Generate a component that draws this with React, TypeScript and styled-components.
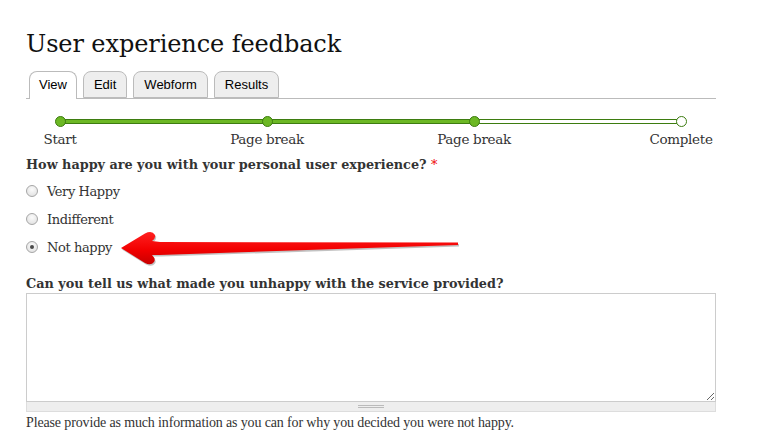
import React from "react";
import styled, { createGlobalStyle } from "styled-components";

const Global = createGlobalStyle`
  html, body { margin: 0; padding: 0; background: #fff; }
  body { font-family: "DejaVu Serif", Georgia, serif; color: #333; }
`;

const Page = styled.div`
  position: relative;
  width: 690px;
  padding: 26px 0 0 26px;
`;

const Title = styled.h1`
  margin: 0;
  font-family: "DejaVu Serif", Georgia, serif;
  font-weight: normal;
  font-size: 24px;
  line-height: 36px;
  color: #111;
  letter-spacing: -0.1px;
`;

const Tabs = styled.ul`
  display: flex;
  gap: 6px;
  margin: 9px 0 0;
  padding: 0 0 0 3px;
  list-style: none;
  border-bottom: 1px solid #bbb;
  height: 27px;
`;

const Tab = styled.li<{ $active?: boolean }>`
  box-sizing: border-box;
  height: ${(p) => (p.$active ? "28px" : "27px")};
  padding: ${(p) => (p.$active ? "0 9px" : "0 10px")};
  border: 1px solid #bbb;
  border-bottom: ${(p) => (p.$active ? "none" : "1px solid #bbb")};
  border-radius: 8px 8px 0 0;
  background: ${(p) => (p.$active ? "#fff" : "#eee")};
  font-family: "Liberation Sans", Arial, sans-serif;
  font-size: 13px;
  line-height: 25px;
  color: #000;
`;

const Progress = styled.div`
  margin: 20px 35px 0 34px;
`;

const Track = styled.div`
  position: relative;
  height: 5px;
  display: flex;
`;

const Filled = styled.div`
  box-sizing: border-box;
  flex: 0 0 414px;
  height: 5px;
  background: #6cb824;
  border: 1px solid #3d7c10;
`;

const Empty = styled.div`
  box-sizing: border-box;
  flex: 1;
  height: 5px;
  background: #fff;
  border: 1px solid #3d7c10;
  border-left: none;
`;

const Dot = styled.span<{ $done?: boolean }>`
  position: absolute;
  top: -3px;
  width: 11px;
  height: 11px;
  box-sizing: border-box;
  margin-left: -5.5px;
  border-radius: 50%;
  border: 1px solid #3d7c10;
  background: ${(p) => (p.$done ? "#6cb824" : "#fff")};
`;

const Labels = styled.div`
  display: flex;
  justify-content: space-between;
  margin-top: 5px;
`;

const LabelSlot = styled.div`
  width: 0;
  display: flex;
  justify-content: center;
  white-space: nowrap;
  font-size: 13.5px;
  letter-spacing: -0.3px;
  line-height: 20px;
  color: #333;
`;

const Question = styled.div`
  margin-top: 6px;
  font-weight: bold;
  font-size: 12.8px;
  line-height: 20px;
  color: #333;
`;

const Req = styled.span`
  color: #e00;
  font-weight: normal;
`;

const Options = styled.div`
  display: flex;
  flex-direction: column;
  gap: 8px;
  margin-top: 6px;
`;

const Option = styled.label`
  display: flex;
  align-items: center;
  gap: 9px;
  height: 20px;
  font-size: 13px;
  letter-spacing: -0.4px;
  color: #333;
`;

const Radio = styled.span<{ $checked?: boolean }>`
  position: relative;
  box-sizing: border-box;
  width: 12px;
  height: 12px;
  border-radius: 50%;
  border: 1px solid #a6a6a6;
  background: radial-gradient(circle at 50% 35%, #fbfbfb 0%, #e6e6e6 70%, #d8d8d8 100%);
  &::after {
    content: "";
    display: ${(p) => (p.$checked ? "block" : "none")};
    position: absolute;
    left: 3px;
    top: 3px;
    width: 4px;
    height: 4px;
    border-radius: 50%;
    background: #4a4a4a;
  }
`;

const Question2 = styled(Question)`
  margin-top: 17px;
  margin-bottom: -1px;
`;

const Area = styled.textarea`
  display: block;
  box-sizing: border-box;
  width: 690px;
  height: 109px;
  margin: 0;
  border: 1px solid #ccc;
  resize: vertical;
  font-family: inherit;
`;

const Grippie = styled.div`
  box-sizing: border-box;
  height: 10px;
  background: #eee;
  border: 1px solid #ddd;
  border-top: none;
  display: flex;
  justify-content: center;
  align-items: center;
`;

const GripLines = styled.span`
  width: 26px;
  height: 3px;
  border-top: 1px solid #bbb;
  border-bottom: 1px solid #bbb;
  box-sizing: border-box;
`;

const Description = styled.div`
  margin-top: 2px;
  font-family: "Liberation Serif", "Times New Roman", serif;
  font-size: 14px;
  line-height: 18px;
  color: #333;
  letter-spacing: -0.14px;
`;

const Arrow = styled.svg`
  position: absolute;
  left: 100px;
  top: 220px;
  overflow: visible;
`;

const steps = ["Start", "Page break", "Page break", "Complete"];

const arrowPath =
  "M 21 28 L 45 13.5 Q 52 10 55 15 Q 56 18 52 21 L 60 22 L 358 22.5 L 358 25 L 60 35 L 52 35 Q 56 39 54 42 Q 51 46 45 43 Z";

export default function App() {
  return (
    <>
      <Global />
      <Page>
        <Title>User experience feedback</Title>
        <Tabs>
          <Tab $active>View</Tab>
          <Tab>Edit</Tab>
          <Tab>Webform</Tab>
          <Tab>Results</Tab>
        </Tabs>
        <Progress>
          <Track>
            <Filled />
            <Empty />
            {[0, 1, 2, 3].map((i) => (
              <Dot key={i} $done={i < 3} style={{ left: `${(i * 100) / 3}%` }} />
            ))}
          </Track>
          <Labels>
            {steps.map((s, i) => (
              <LabelSlot key={i}>{s}</LabelSlot>
            ))}
          </Labels>
        </Progress>
        <Question>
          How happy are you with your personal user experience? <Req>*</Req>
        </Question>
        <Options>
          <Option>
            <Radio />
            Very Happy
          </Option>
          <Option>
            <Radio />
            Indifferent
          </Option>
          <Option>
            <Radio $checked />
            Not happy
          </Option>
        </Options>
        <Question2>Can you tell us what made you unhappy with the service provided?</Question2>
        <Area />
        <Grippie>
          <GripLines />
        </Grippie>
        <Description>
          Please provide as much information as you can for why you decided you were not happy.
        </Description>
        <Arrow width="370" height="50" viewBox="0 0 370 50">
          <defs>
            <linearGradient id="ag" x1="0" y1="0" x2="0" y2="1">
              <stop offset="0" stopColor="#ff2020" />
              <stop offset="0.55" stopColor="#f20000" />
              <stop offset="1" stopColor="#c80000" />
            </linearGradient>
          </defs>
          <path d={arrowPath} fill="#777" opacity="0.45" transform="translate(1 1.5)" />
          <path d={arrowPath} fill="url(#ag)" />
        </Arrow>
      </Page>
    </>
  );
}
